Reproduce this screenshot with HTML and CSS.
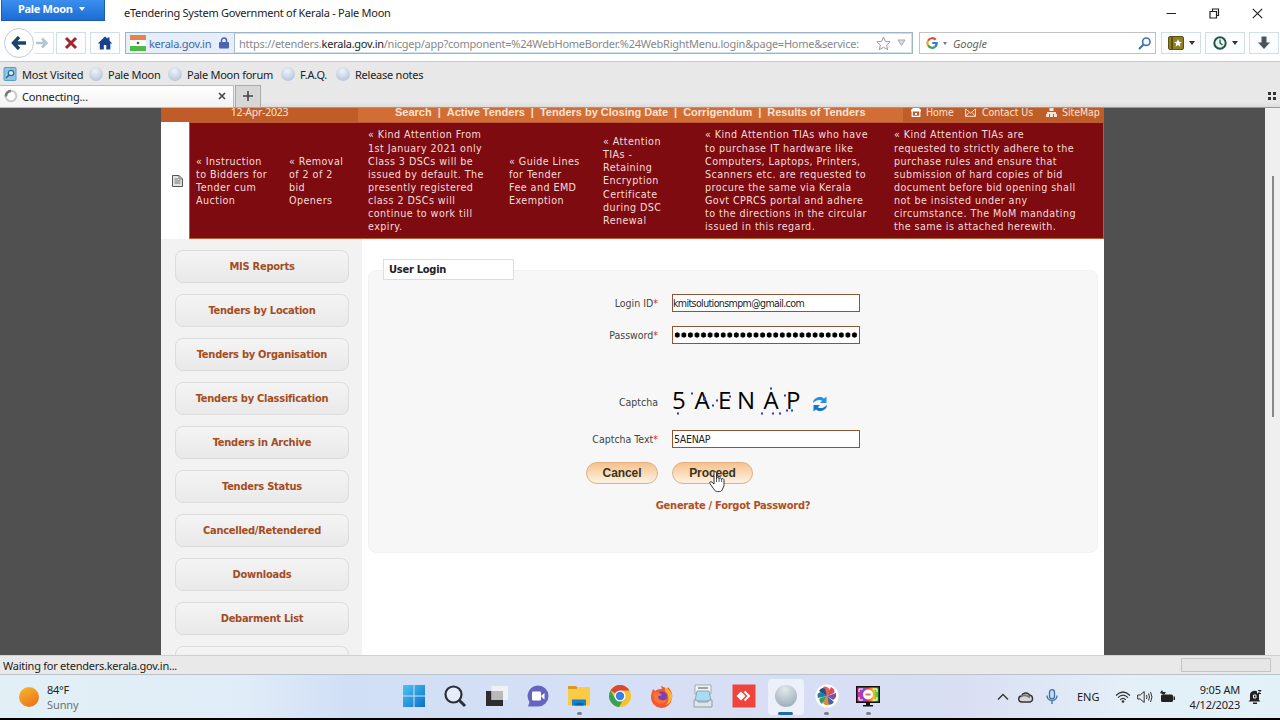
FILE: index.html
```html
<!DOCTYPE html>
<html lang="en">
<head>
    <meta charset="UTF-8">
    <meta name="viewport" content="width=device-width, initial-scale=1.0">
    <title>eTendering System Government of Kerala - Pale Moon</title>
    <link rel="stylesheet" href="styles.css">
</head>
<body>

    <!-- Title bar -->
    <header class="titlebar">
        <div class="app-button">Pale Moon <span class="caret white"></span></div>
        <div class="window-title">eTendering System Government of Kerala - Pale Moon</div>
        <div class="window-controls">
            <svg width="11" height="11" viewBox="0 0 11 11"><path d="M.5 5.5h9.5" stroke="#222" fill="none"/></svg>
            <svg width="11" height="11" viewBox="0 0 11 11"><path d="M1 3.5h6.500v6.500H1zM3.500 3.500V1h6v6.500H7.500" stroke="#222" stroke-width="1.200" fill="none"/></svg>
            <svg width="11" height="11" viewBox="0 0 11 11"><path d="M.8.800l9.400 9.400M10.200.8L.8 10.200" stroke="#222" stroke-width="1.200" fill="none"/></svg>
        </div>
    </header>

    <!-- Navigation toolbar -->
    <div class="toolbar">
        <div class="back-button">
            <svg width="16" height="14" viewBox="0 0 16 14"><path d="M8 1L2.500 7 8 13M3 7h12" stroke="#1d4368" stroke-width="3.400" fill="none"/></svg>
        </div>
        <div class="forward-button">
            <svg width="12" height="12" viewBox="0 0 12 12"><path d="M6 1.500l4.500 4.500L6 10.500M0 6h9.500" stroke="#b3c5d3" stroke-width="2.600" fill="none"/></svg>
        </div>
        <div class="tool-button stop">
            <svg width="14" height="14" viewBox="0 0 14 14"><path d="M2 2l10 10M12 2L2 12" stroke="#a3252c" stroke-width="3" fill="none"/></svg>
        </div>
        <div class="tool-button home">
            <svg width="16" height="14" viewBox="0 0 16 14"><path d="M8 .5L.8 7.500h2V13.500h4V9h2.500v4.500h4v-6h2L12.500 4.700V1.500h-2v1.300z" fill="#17408f"/></svg>
        </div>
        <div class="url-bar">
            <div class="identity">
                <svg width="16" height="16" viewBox="0 0 16 16"><path fill="#e8824a" d="M0 0h16v5H0z"/><path fill="#fff" d="M0 5h16v6H0z"/><path fill="#4dbb45" d="M0 11h16v5H0z"/><circle cx="8" cy="8" r="1.300" fill="#556"/></svg>
                <span class="domain">kerala.gov.in</span>
                <svg width="10" height="12" viewBox="0 0 10 12"><path d="M2.500 6V3.500a2.500 2.500 0 015 0V6" stroke="#4965ae" stroke-width="1.500" fill="none"/><rect y="5" width="10" height="6.500" rx="1" fill="#4965ae"/></svg>
            </div>
            <div class="url">https://etenders.<b>kerala.gov.in</b>/nicgep/app?component=%24WebHomeBorder.%24WebRightMenu.login&amp;page=Home&amp;service:</div>
            <svg class="star" width="15" height="15" viewBox="0 0 15 15"><path d="M7.500 1l1.900 4.400 4.800.4-3.600 3.200 1.100 4.700-4.200-2.500-4.200 2.500L4.400 9 .8 5.800l4.800-.4z" stroke="#9c9c9c" fill="#fff"/></svg>
            <svg width="9" height="8" viewBox="0 0 9 8"><path d="M1 1h7L4.500 6.500z" fill="#ddd" stroke="#aaa"/></svg>
        </div>
        <div class="search-bar">
            <svg width="12" height="12" viewBox="0 0 12 12" fill="none" stroke-width="2.200"><path d="M9.700 2.800A4.700 4.700 0 002 3.700" stroke="#dd4b39"/><path d="M2 3.700a4.700 4.700 0 000 4.600" stroke="#e7ad27"/><path d="M2 8.300a4.700 4.700 0 007 1.500" stroke="#38a35a"/><path d="M6.200 6h4.500a4.700 4.700 0 01-1.700 3.800" stroke="#3e78d6"/></svg>
            <span class="caret small"></span>
            <span class="search-text">Google</span>
            <svg class="lens" width="13" height="13" viewBox="0 0 13 13"><circle cx="8.300" cy="4.700" r="3.700" stroke="#3c73ad" stroke-width="1.600" fill="none"/><path d="M5.500 7.500L1 12" stroke="#3c73ad" stroke-width="2.200"/></svg>
        </div>
        <div class="tool-button wide bookmarks-menu">
            <svg width="16" height="14" viewBox="0 0 16 14"><rect x=".5" y=".5" width="15" height="13" rx="1.500" fill="#8f7f22" stroke="#5b5118"/><path d="M4 1v12" stroke="#4b430f" stroke-width="1.500"/><path d="M10 3l1.100 2.700 2.900.2-2.200 1.900.7 2.900L10 9.100l-2.500 1.600.7-2.900L6 5.900l2.900-.2z" fill="#fff"/></svg>
            <span class="caret"></span>
        </div>
        <div class="tool-button wide history-menu">
            <svg width="14" height="14" viewBox="0 0 14 14"><circle cx="7" cy="7" r="5.700" stroke="#215748" stroke-width="2" fill="#e9f5ef"/><path d="M7 3.500V7l2.500 2" stroke="#215748" stroke-width="1.300" fill="none"/></svg>
            <span class="caret"></span>
        </div>
        <div class="tool-button downloads">
            <svg width="14" height="14" viewBox="0 0 14 14"><path d="M4.500.5h5v6H13L7 13 1 6.500h3.500z" fill="#4b535b"/></svg>
        </div>
    </div>

    <!-- Bookmarks toolbar -->
    <nav class="bookmarks">
        <svg width="14" height="14" viewBox="0 0 14 14"><rect x="1" y=".5" width="12" height="13" rx="1" fill="#8fc3e2" stroke="#5b9cc4"/><circle cx="8" cy="6" r="2.700" fill="#d9effb" stroke="#2a6696" stroke-width="1.200"/><path d="M6 8l-3 3" stroke="#2a6696" stroke-width="1.500"/></svg>
        <span class="bm bm-visited">Most Visited</span>
        <i class="moon"></i><span class="bm bm-moon">Pale Moon</span>
        <i class="moon"></i><span class="bm bm-forum">Pale Moon forum</span>
        <i class="moon"></i><span class="bm bm-faq">F.A.Q.</span>
        <i class="moon"></i><span class="bm">Release notes</span>
    </nav>

    <!-- Tabs -->
    <div class="tabs">
        <div class="tab">
            <svg width="14" height="14" viewBox="0 0 14 14"><circle cx="7" cy="7" r="5.300" stroke="#c9c9c9" stroke-width="2" fill="#fff"/><path d="M2 7.500A5 5 0 017 2" stroke="#777" stroke-width="2.600" fill="none"/></svg>
            <span class="tab-label">Connecting...</span>
            <svg width="8" height="8" viewBox="0 0 8 8"><path d="M1 1l6 6M7 1L1 7" stroke="#444" stroke-width="1.600"/></svg>
        </div>
        <div class="new-tab"><svg width="10" height="10" viewBox="0 0 10 10"><path d="M5 0v10M0 5h10" stroke="#444" stroke-width="1.600"/></svg></div>
        <svg class="tab-groups" width="9" height="8" viewBox="0 0 9 8"><path d="M0 0h3v3H0zM5 0h3v3H5zM0 5h3v3H0zM5 5h3v3H5z" fill="#333"/></svg>
    </div>

    <!-- Page -->
    <div class="viewport">
        <main class="page">
            <div class="menu">
                <div class="date"><span>12-Apr-2023</span></div>
                <div class="links"><span>Search</span><i>|</i><span>Active Tenders</span><i>|</i><span>Tenders by Closing Date</span><i>|</i><span>Corrigendum</span><i>|</i><span>Results of Tenders</span></div>
                <div class="quick">
                    <svg width="10" height="9" viewBox="0 0 10 9"><path d="M0 2L2 0h6l2 2v1.500H0z" fill="#fff"/><path d="M1.200 3v5.300h7.600V3" stroke="#fff" stroke-width="1.200" fill="none"/><path d="M4 5h2v2H4z" fill="#fff"/></svg>
                    <span class="q-home">Home</span>
                    <svg width="11" height="9" viewBox="0 0 11 9"><path d="M.6 1v7.300h9.800V1L5.500 5zM.6 8.300L4 4.500M10.400 8.300L7 4.500" stroke="#fbe3d3" fill="none"/></svg>
                    <span class="q-contact">Contact Us</span>
                    <svg width="11" height="9" viewBox="0 0 11 9"><path d="M3.500 0h4v3h-4zM0 6h3v3H0zM4 6h3v3H4zM8 6h3v3H8zM1 4h9v2H1z" fill="#fbe3d3"/></svg>
                    <span>SiteMap</span>
                </div>
            </div>

            <div class="notice-row">
                <div class="notice-icon">
                    <svg width="11" height="12" viewBox="0 0 11 12"><path d="M.5.5H7l3.500 3.500v7.500H.5z" fill="#e2e2e2" stroke="#555"/><path d="M7 .5V4h3.500M2.500 4H6M2.500 6h6M2.500 8h6" stroke="#777" fill="none"/></svg>
                </div>
                <div class="notices">
                    <p class="n1">« Instruction<br>to Bidders for<br>Tender cum<br>Auction</p>
                    <p class="n2">« Removal<br>of 2 of 2<br>bid<br>Openers</p>
                    <p class="n3">« Kind Attention From<br>1st January 2021 only<br>Class 3 DSCs will be<br>issued by default. The<br>presently registered<br>class 2 DSCs will<br>continue to work till<br>expiry.</p>
                    <p class="n4">« Guide Lines<br>for Tender<br>Fee and EMD<br>Exemption</p>
                    <p class="n5">« Attention<br>TIAs -<br>Retaining<br>Encryption<br>Certificate<br>during DSC<br>Renewal</p>
                    <p class="n6">« Kind Attention TIAs who have<br>to purchase IT hardware like<br>Computers, Laptops, Printers,<br>Scanners etc. are requested to<br>procure the same via Kerala<br>Govt CPRCS portal and adhere<br>to the directions in the circular<br>issued in this regard.</p>
                    <p class="n7">« Kind Attention TIAs are<br>requested to strictly adhere to the<br>purchase rules and ensure that<br>submission of hard copies of bid<br>document before bid opening shall<br>not be insisted under any<br>circumstance. The MoM mandating<br>the same is attached herewith.</p>
                </div>
            </div>

            <div class="columns">
                <aside class="sidebar">
                    <a class="side-link">MIS Reports</a>
                    <a class="side-link">Tenders by Location</a>
                    <a class="side-link">Tenders by Organisation</a>
                    <a class="side-link">Tenders by Classification</a>
                    <a class="side-link">Tenders in Archive</a>
                    <a class="side-link">Tenders Status</a>
                    <a class="side-link">Cancelled/Retendered</a>
                    <a class="side-link">Downloads</a>
                    <a class="side-link">Debarment List</a>
                    <a class="side-link"></a>
                </aside>

                <section class="content">
                    <div class="login-panel">
                        <div class="panel-title">User Login</div>
                        <form class="login-form">
                            <label>Login ID<em>*</em></label>
                            <div class="field login-id">kmitsolutionsmpm@gmail.com</div>
                            <label>Password<em>*</em></label>
                            <div class="field password"></div>
                            <label class="captcha-label">Captcha</label>
                            <div class="captcha">
                                <svg width="132" height="36" viewBox="0 -2.5 132 36">
                                    <g class="captcha-text">
                                        <text x="0" y="26">5</text><text x="22.500" y="26">A</text><text x="46" y="26">E</text><text x="65" y="26">N</text><text x="91.500" y="26">A</text><text x="114" y="26">P</text>
                                    </g>
                                    <path d="M19 10h2v2h-2zM31 15h3v3h-3zM40 22h2v2h-2zM44 17h2v2h-2zM57 13h2v2h-2zM5 30h2v2H5zM98 5h2v2h-2zM112 12h2v2h-2zM89 30h2v2h-2zM100 30h2v2h-2zM107 30h2v2h-2zM114 27h2v2h-2zM119 27h2v2h-2z" fill="#3534c4"/>
                                </svg>
                                <svg class="refresh" width="16" height="16" viewBox="0 0 16 16"><path d="M1 7C1 2 8-1 12 2.500L14.500.5V7H8l2.200-2.200C7.500 3 4 4 1 7z" fill="#2a8fe0"/><path d="M15 9c0 5-7 8-11 4.500L1.500 15.500V9H8l-2.200 2.200C8.500 13 12 12 15 9z" fill="#1673cf"/></svg>
                            </div>
                            <label>Captcha Text<em>*</em></label>
                            <div class="field">5AENAP</div>
                        </form>
                        <div class="buttons">
                            <div class="button cancel">Cancel</div>
                            <div class="button proceed">Proceed
                                <svg class="cursor" width="18" height="22" viewBox="0 0 18 22"><path d="M5 1.700C5 .4 7.500.4 7.500 1.700V7.500c0-1.200 2.600-1.100 2.600.2 0-1.100 2.500-.9 2.500.5 0-1 2.400-.7 2.400.8v4.500c0 2-.8 3-1.500 4.500-.5 1.800-1.500 2.500-3 2.500H8.500c-1.800 0-3-1-4-2.800L1 12.700c-1-1.800.8-2.700 2-1.500L5 13z" fill="#fff" stroke="#333"/><path d="M7.500 7v4M10.100 7.500v3.500M12.600 8v3" stroke="#333" stroke-width=".8"/></svg>
                            </div>
                        </div>
                        <a class="forgot">Generate / Forgot Password?</a>
                    </div>
                </section>
            </div>
        </main>
        <div class="scrollbar"><div class="thumb"></div></div>
    </div>

    <div class="statusbar">
        <span>Waiting for etenders.kerala.gov.in...</span>
        <div class="progress"></div>
    </div>

    <!-- Windows taskbar -->
    <footer class="taskbar">
        <div class="weather">
            <div class="sun"></div>
            <div class="weather-text"><div class="temp">84°F</div><div class="sky">Sunny</div></div>
        </div>
        <div class="apps">
            <div class="app"><svg width="24" height="24" viewBox="0 0 24 24"><defs><linearGradient id="win" x1="0" y1="0" x2="1" y2="1"><stop offset="0" stop-color="#4cc4f2"/><stop offset="1" stop-color="#0a70cc"/></linearGradient></defs><path d="M1 1h10.500v10.500H1zM12.500 1H23v10.500H12.500zM1 12.500h10.500V23H1zM12.500 12.500H23V23H12.500z" fill="url(#win)"/></svg></div>
            <div class="app"><svg width="24" height="24" viewBox="0 0 24 24"><circle cx="10.500" cy="10.500" r="8" stroke="#2c3037" stroke-width="2.200" fill="#e6edfa"/><path d="M16.500 16.500l5.500 5.500" stroke="#2c3037" stroke-width="3"/></svg></div>
            <div class="app"><svg width="24" height="24" viewBox="0 0 24 24"><path d="M1 7h17v15H1z" fill="#2d2d2f"/><path d="M6.500 2H23v14H6.500z" fill="#f5f5f5" opacity=".85"/><path d="M6.500 7H18v9H6.500z" fill="#b9b9bb"/></svg></div>
            <div class="app"><svg width="24" height="24" viewBox="0 0 24 24"><path d="M12 1.500A10.500 10.500 0 1112 22.500H2l1.500-4.500A10.500 10.500 0 0112 1.500z" fill="#6664c3"/><rect x="6" y="7.500" width="9" height="9" rx="1" fill="#fff"/><path d="M15.500 11.500L18.500 9v6.500l-3-2.500z" fill="#fff"/></svg></div>
            <div class="app running"><svg width="24" height="24" viewBox="0 0 24 24"><path d="M1 2h8l2 2h-1v4H1z" fill="#d99a1d"/><path d="M1 5h9l2-2h11v18.500H1z" fill="#fbcb45"/><path d="M5 15.500h14v6H5z" fill="#1682cb"/><path d="M7.500 19h9v2.500h-9z" fill="#0c609f"/></svg></div>
            <div class="app"><svg width="24" height="24" viewBox="0 0 24 24"><circle cx="12" cy="12" r="11" fill="#f4c430"/><path d="M12 12L2.500 6.500A11 11 0 0121.500 6.500H12z" fill="#dd4436"/><path d="M2.500 6.500A11 11 0 0011 23l5-8.500-8.500.500z" fill="#35a355"/><circle cx="12" cy="12" r="5.500" fill="#fff"/><circle cx="12" cy="12" r="4.200" fill="#3c7ee8"/></svg></div>
            <div class="app"><svg width="24" height="24" viewBox="0 0 24 24"><path d="M3 5l2 2c3-2 5-2 7-2l-1-3c4 1 5 3 6 4l1-3c3 3 5 7 4 11A10.500 10.500 0 011 13C1 10 2 8 3 5z" fill="#f5572f"/><path d="M15 3c5 3 8 7 7 11-1 4-3 6-6 7 4-5 3-11-1-14z" fill="#fdb92e"/><circle cx="12" cy="12.500" r="5" fill="#7c3fc0"/><path d="M3 9c5-2 7 0 9 2-2 1-3 1-4 1 0 5 6 5 9 3-2 6-11 6-13 0z" fill="#fb7434"/></svg></div>
            <div class="app"><svg width="24" height="24" viewBox="0 0 24 24"><path d="M4 1h16v9H4z" fill="#f1f3f4" stroke="#a3abb0"/><path d="M6 7h12l2 10H4z" fill="#a9dcf3" stroke="#8ba7b3"/><path d="M3 16h3l1 2h10l1-2h3v7H3z" fill="#e0e5e8" stroke="#949da3"/><path d="M7 4h10" stroke="#7e898e" stroke-width="1.500"/></svg></div>
            <div class="app"><svg width="24" height="24" viewBox="0 0 24 24"><path d="M.5.5h23v23H.5z" fill="#ef443b"/><path d="M9 7.500l4.500 4.500L9 16.500 4.500 12z" fill="#fff"/><path d="M12.500 7.500l4.500 4.500-4.500 4.500" stroke="#fff" stroke-width="2" fill="none"/></svg></div>
            <div class="app active"><i class="moon big"></i></div>
            <div class="app running"><svg width="24" height="24" viewBox="0 0 24 24"><circle cx="12" cy="12" r="11.500" fill="#fff"/><path d="M12 12L8 3q4-2 7 3z" fill="#e8604c"/><path d="M12 12l4-9q5 3 3 6z" fill="#d84b63"/><path d="M12 12l9-3q1 5-3 7z" fill="#8050a0"/><path d="M12 12l7 6q-3 4-6 2z" fill="#465fab"/><path d="M12 12l2 9q-5 1-6-3z" fill="#e38b30"/><path d="M12 12l-5 8q-4-3-2-6z" fill="#3d9a62"/><path d="M12 12l-9 2q-2-5 3-6z" fill="#247b9c"/><path d="M12 12L4 7q3-5 6-2z" fill="#1c4f86"/></svg></div>
            <div class="app running"><svg width="24" height="24" viewBox="0 0 24 24"><defs><linearGradient id="rainbow"><stop offset="0" stop-color="#e92b8b"/><stop offset=".3" stop-color="#7c4ddf"/><stop offset=".5" stop-color="#f03c2d"/><stop offset=".75" stop-color="#f4c51c"/><stop offset="1" stop-color="#2dbb4e"/></linearGradient></defs><path d="M0 2h24v17H0z" fill="#111"/><path d="M1.500 3.500h21v14h-21z" fill="url(#rainbow)"/><path d="M3 8V5h4M17 5h4v3M3 13v3h4M17 16h4v-3" stroke="#fff" fill="none"/><circle cx="12" cy="10.500" r="5" fill="#fff"/><path d="M9.500 10.500h5" stroke="#e8705c" stroke-width="2"/><path d="M10 19h4v2h3v1.500H7V21h3z" fill="#111"/></svg></div>
        </div>
        <div class="tray">
            <svg width="12" height="8" viewBox="0 0 12 8"><path d="M1 6.500L6 1.500l5 5" stroke="#333" stroke-width="1.300" fill="none"/></svg>
            <svg class="cloud" width="16" height="12" viewBox="0 0 16 12"><path d="M4 11a3 3 0 01-.5-6 4.500 4.500 0 018-1A3.600 3.600 0 0112 11z" fill="#d6d6d6" stroke="#333" stroke-width="1.400"/><path d="M3 5.500q4-3 9 1" stroke="#777" stroke-width="2" fill="none"/></svg>
            <svg class="mic" width="12" height="15" viewBox="0 0 12 15"><rect x="3.500" y=".7" width="5" height="9" rx="2.500" fill="#cbdcf1" stroke="#3b6fab" stroke-width="1.300"/><path d="M1 6.500c0 6.500 10 6.500 10 0M6 11.500V15" stroke="#3b6fab" stroke-width="1.300" fill="none"/></svg>
            <span class="lang">ENG</span>
            <svg class="wifi" width="16" height="12" viewBox="0 0 16 12"><path d="M1 4.500q7-7 14 0M3 6.700q5-5 10 0M5.200 8.800q2.800-3 5.600 0" stroke="#333" stroke-width="1.200" fill="none"/><circle cx="8" cy="10.500" r="1.300" fill="#333"/></svg>
            <svg class="volume" width="16" height="14" viewBox="0 0 16 14"><path d="M.7 5h2.500l4-3.500v11L3.200 9H.7z" stroke="#333" fill="none"/><path d="M9.500 5q1 2 0 4M11.500 3.500q2 3.500 0 7M13.500 2q3 5 0 10" stroke="#333" fill="none"/></svg>
            <svg class="battery" width="15" height="13" viewBox="0 0 15 13"><rect x="1" y="4.500" width="12" height="7.500" rx="1.500" fill="#222"/><path d="M13.500 6.500H15v3.500h-1.500zM0 3l2-3 1 2h3L4 5 2.500 4z" fill="#222"/></svg>
            <div class="clock">9:05 AM<br>4/12/2023</div>
            <svg class="bell" width="14" height="15" viewBox="0 0 14 15"><path d="M2 11V6c0-5 8-6 9-1v6l1.500 1.500H.5zM5 13.500h4V15H5z" fill="#222"/><path d="M5.500 6H8v3H5.500z" stroke="#eee" fill="none"/><path d="M9 .5h4v4H9z" fill="#e3edf7"/><path d="M10 1.500h3L10 4.500h3" stroke="#222" fill="none"/></svg>
        </div>
    </footer>

</body>
</html>
```
FILE: styles.css
```css
* {
    box-sizing: border-box;
}
body {
    margin: 0;
    width: 1280px;
    height: 720px;
    overflow: hidden;
    background: #000;
    font-family: "Noto Sans", "Open Sans", sans-serif;
    font-size: 11px;
    letter-spacing: -.25px;
    color: #222;
    display: flex;
    flex-direction: column;
    white-space: nowrap;
}
svg {
    display: block;
    flex: none;
}
.caret {
    display: inline-block;
    border: 3.5px solid transparent;
    border-top: 4px solid #333;
    border-bottom: 0;
}
.caret.white {
    border-top-color: #fff;
    margin-left: 4px;
    vertical-align: 2px;
}
.caret.small {
    border-width: 3px 2.5px 0;
    border-top-color: #777;
    margin-left: 5px;
}

/* title bar */
.titlebar {
    height: 27px;
    flex: none;
    background: #fff;
    display: flex;
    align-items: flex-start;
}
.app-button {
    width: 104px;
    height: 21px;
    margin-left: 1px;
    padding-left: 16px;
    background: linear-gradient(#3c8fee, #1b6cd4);
    border: 1px solid #1c5cab;
    border-top: 0;
    color: #fff;
    font-weight: bold;
    line-height: 18px;
    letter-spacing: -.3px;
}
.window-title {
    margin-left: 19px;
    line-height: 25px;
}
.window-controls {
    margin-left: auto;
    margin-right: 17px;
    padding-top: 8px;
    display: flex;
    gap: 32px;
}

/* navigation */
.toolbar {
    height: 35px;
    flex: none;
    background: #fff;
    border-bottom: 1px solid #c9c9c9;
    display: flex;
    align-items: flex-start;
    padding: 5px 0 0 4px;
}
.back-button {
    width: 30px;
    height: 30px;
    margin-top: -4px;
    border: 1px solid #bccbd8;
    border-radius: 50%;
    display: flex;
    align-items: center;
    justify-content: center;
}
.forward-button {
    width: 20px;
    height: 22px;
    border: 1px solid #dde5ea;
    border-left: 0;
    display: flex;
    align-items: center;
    padding-left: 2px;
}
.tool-button {
    height: 22px;
    width: 30px;
    border: 1px solid #d3dee6;
    background: #fbfdfe;
    display: flex;
    align-items: center;
    justify-content: center;
}
.stop {
    margin-left: 2px;
}
.home {
    margin-left: 4px;
}
.url-bar {
    width: 788px;
    height: 22px;
    margin-left: 5px;
    border: 1px solid #9db5ca;
    box-shadow: inset 0 0 0 1px #cfe0ee;
    background: #fff;
    display: flex;
    align-items: center;
}
.identity {
    width: 109px;
    height: 20px;
    flex: none;
    padding-left: 4px;
    background: #e5eef9;
    border-right: 1px solid #a9bccf;
    display: flex;
    align-items: center;
}
.domain {
    width: 69px;
    margin-left: 3px;
    margin-right: 1px;
    color: #3d67b0;
}
.url {
    width: 636px;
    flex: none;
    padding-left: 4px;
    color: #888;
}
.url b {
    font-weight: normal;
    color: #222;
}
.star {
    margin-right: 6px;
    margin-left: 5px;
}
.search-bar {
    width: 237px;
    height: 22px;
    margin-left: 6px;
    padding-left: 6px;
    border: 1px solid #bfc3c7;
    display: flex;
    align-items: center;
}
.search-text {
    margin-left: 6px;
    font-style: italic;
    letter-spacing: -.1px;
    color: #666;
}
.lens {
    margin-left: auto;
    margin-right: 4px;
}
.tool-button.wide {
    width: 40px;
    gap: 5px;
}
.bookmarks-menu {
    margin-left: 5px;
}
.history-menu {
    margin-left: 4px;
}
.downloads {
    margin-left: 4px;
}

/* bookmarks */
.bookmarks {
    height: 23px;
    flex: none;
    background: #e8e8e8;
    display: flex;
    align-items: center;
    padding: 1px 0 0 3px;
}
.moon {
    width: 14px;
    height: 14px;
    border-radius: 50%;
    background: radial-gradient(circle at 45% 30%, #eef3f8, #b9c8dc 75%);
}
.moon.big {
    width: 22px;
    height: 22px;
    background: radial-gradient(circle at 45% 20%, #e1e9ec, #9fb0bc 80%);
}
.bm {
    margin-left: 5px;
}
.bm-visited {
    width: 67px;
    letter-spacing: -.15px;
}
.bm-moon { width: 60px; }
.bm-forum { width: 94px; }
.bm-faq { width: 36px; }

/* tabs */
.tabs {
    height: 23px;
    flex: none;
    background: linear-gradient(#e8e8e8 80%, #dcdcdc);
    border-bottom: 1px solid #999;
    display: flex;
    align-items: center;
}
.tab {
    width: 234px;
    height: 23px;
    background: linear-gradient(#fff, #f3f3f3);
    border: 1px solid #bbb;
    border-left: 0;
    display: flex;
    align-items: center;
    padding: 0 7px 0 4px;
}
.tab-label {
    flex: 1;
    margin-left: 4px;
    letter-spacing: -.15px;
}
.new-tab {
    width: 26px;
    height: 23px;
    margin-left: 1px;
    background: #d7d7d7;
    border: 1px solid #aaa;
    display: flex;
    align-items: center;
    justify-content: center;
}
.tab-groups {
    margin-left: auto;
    margin-right: 3px;
}

/* page */
.viewport {
    height: 547px;
    flex: none;
    background: #505050;
    display: flex;
    justify-content: space-between;
    overflow: hidden;
}
.page {
    width: 943px;
    margin-left: 161px;
    background: #fff;
    font-family: "DejaVu Sans Condensed", "DejaVu Sans", sans-serif;
}
.scrollbar {
    width: 15px;
    background: #efefef;
    padding: 68px 0 0 7px;
}
.thumb {
    width: 2px;
    height: 241px;
    background: #888;
}
.menu {
    height: 14px;
    background: #c05c27;
    color: #fbe3d3;
    display: flex;
    line-height: 8px;
    overflow: hidden;
}
.date {
    width: 197px;
    text-align: center;
    font-family: "Noto Sans", sans-serif;
    font-size: 10.5px;
}
.links {
    width: 545px;
    padding-left: 37px;
    background: #d26d36;
    font-family: "Liberation Sans", sans-serif;
    font-weight: bold;
    font-size: 11px;
    letter-spacing: 0;
}
.links i {
    font-style: normal;
    margin: 0 6px;
}
.quick {
    flex: 1;
    display: flex;
    padding-left: 8px;
    font-size: 10.5px;
    letter-spacing: -.05px;
}
.quick span {
    margin-left: 5px;
}
.quick .q-home { width: 39px; }
.quick .q-contact {
    width: 64px;
    margin-left: 6px;
}

.notice-row {
    height: 117px;
    display: flex;
}
.notice-icon {
    width: 28px;
    padding-left: 11px;
    display: flex;
    align-items: center;
}
.notices {
    width: 915px;
    border: 1px solid #bd5a31;
    background: #7d0b0f;
    color: #f7dcdc;
    font-family: "DejaVu Sans", sans-serif;
    font-size: 9.6px;
    line-height: 13.15px;
    letter-spacing: .43px;
    display: flex;
    align-items: center;
    padding: 1px 0 0 6px;
}
.notices p {
    margin: 0;
    flex: none;
}
.n1 { width: 93px; }
.n2 { width: 79px; }
.n3 { width: 141px; }
.n4 { width: 94px; }
.n5 { width: 102px; }
.n6 { width: 189px; }

.columns {
    display: flex;
}
.sidebar {
    width: 201px;
    height: 420px;
    padding: 11px 13px 0 14px;
    background: #f2f2f2;
    display: flex;
    flex-direction: column;
    gap: 11px;
}
.side-link {
    height: 33px;
    flex: none;
    border: 1px solid #dcdcdc;
    border-radius: 8px;
    background: linear-gradient(#f4f4f4, #e9e9e9);
    color: #a34d1f;
    font-weight: bold;
    line-height: 31px;
    text-align: center;
}
.content {
    width: 742px;
    padding: 31px 6px 0;
}
.login-panel {
    height: 283px;
    border: 1px solid #f2f2f2;
    border-radius: 8px;
    background: #f7f7f7;
    font-size: 10.5px;
}
.panel-title {
    width: 131px;
    height: 21px;
    margin: -12px 0 0 14px;
    padding-left: 5px;
    border: 1px solid #ddd;
    background: #fff;
    font-weight: bold;
    font-size: 11px;
    line-height: 20px;
}
.login-form {
    display: grid;
    grid-template-columns: 289px 188px;
    grid-template-rows: 18px 18px 58px 18px;
    row-gap: 14px;
    column-gap: 14px;
    padding-top: 14px;
    align-items: center;
}
.login-form label {
    text-align: right;
    letter-spacing: 0;
    color: #444;
}
.login-form em {
    color: #d22;
    font-style: normal;
}
.field {
    height: 18px;
    border: 1px solid #8f5434;
    background: #fff;
    color: #222;
    line-height: 17px;
    padding-left: 1px;
    overflow: hidden;
}
.login-id {
    padding-left: 0;
    letter-spacing: -.6px;
}
.password {
    padding: 0 1px;
    background: radial-gradient(circle, #000 2.300px, transparent 2.900px) 0 0 / 6.570px 100% repeat-x content-box, linear-gradient(#fff, #fff);
}
.login-form .captcha-label {
    align-self: end;
    padding-bottom: 8px;
}
.captcha {
    display: flex;
    align-items: center;
    align-self: end;
}
.captcha-text {
    font-family: "Open Sans", "Noto Sans", sans-serif;
    font-size: 24px;
    fill: #000;
}
.refresh {
    margin-left: 8px;
    margin-top: 12px;
}
.buttons {
    display: flex;
    gap: 14px;
    padding: 14px 0 0 217px;
}
.button {
    height: 22px;
    border: 1px solid #dfb185;
    border-radius: 11px;
    background: linear-gradient(#f6c28c, #fdeedd 90%);
    font-family: "Liberation Sans", sans-serif;
    font-weight: bold;
    font-size: 12px;
    letter-spacing: -.1px;
    line-height: 21px;
    text-align: center;
    color: #3b3320;
}
.cancel {
    width: 72px;
}
.proceed {
    width: 81px;
    position: relative;
}
.cursor {
    position: absolute;
    left: 36px;
    top: 8px;
}
.forgot {
    display: block;
    margin-top: 15px;
    text-align: center;
    font-weight: bold;
    font-size: 11px;
    color: #b34e20;
}

/* status bar */
.statusbar {
    height: 19px;
    flex: none;
    background: #e9e9e9;
    border-top: 1px solid #d0d0d0;
    display: flex;
    align-items: center;
    justify-content: space-between;
    padding: 0 9px 0 3px;
}
.progress {
    width: 90px;
    height: 14px;
    border: 1px solid #c4c4c4;
    background: #e6e6e6;
}

/* taskbar */
.taskbar {
    height: 44px;
    flex: none;
    border-top: 1px solid #b9c1c9;
    background: linear-gradient(90deg, #e2f0f6 0, #e0ecf7 19%, #d1dff6 27%, #d6dff5 50%, #d9def2 75%, #e4eff8 88%, #e2f1f7);
    display: flex;
    align-items: center;
    letter-spacing: 0;
}
.weather {
    width: 396px;
    padding-left: 19px;
    display: flex;
    align-items: center;
}
.sun {
    width: 20px;
    height: 20px;
    border-radius: 50%;
    background: linear-gradient(150deg, #f7bb2e, #ea6a1a);
}
.weather-text {
    margin-left: 8px;
    line-height: 15px;
}
.temp {
    letter-spacing: -.25px;
}
.sky {
    color: #6a7178;
    letter-spacing: -.1px;
}
.apps {
    display: flex;
    gap: 5.300px;
}
.app {
    width: 36px;
    height: 36px;
    flex: none;
    padding-bottom: 1px;
    border-radius: 4px;
    display: flex;
    align-items: center;
    justify-content: center;
    position: relative;
}
.app.active {
    background: #ebf0fa;
}
.running::after, .active::after {
    content: "";
    position: absolute;
    bottom: 0;
    width: 5px;
    height: 3px;
    border-radius: 2px;
    background: #7b8089;
}
.active::after {
    width: 15px;
    background: #1f6ca3;
}
.tray {
    margin-left: auto;
    margin-right: 18px;
    display: flex;
    align-items: center;
}
.cloud { margin-left: 9px; }
.mic { margin-left: 12px; }
.lang {
    margin-left: 19px;
    width: 38px;
}
.volume { margin-left: 6px; }
.battery { margin-left: 7px; }
.clock {
    width: 65px;
    line-height: 15px;
    text-align: right;
    letter-spacing: -.2px;
}
.bell {
    margin-left: 8px;
}
```
